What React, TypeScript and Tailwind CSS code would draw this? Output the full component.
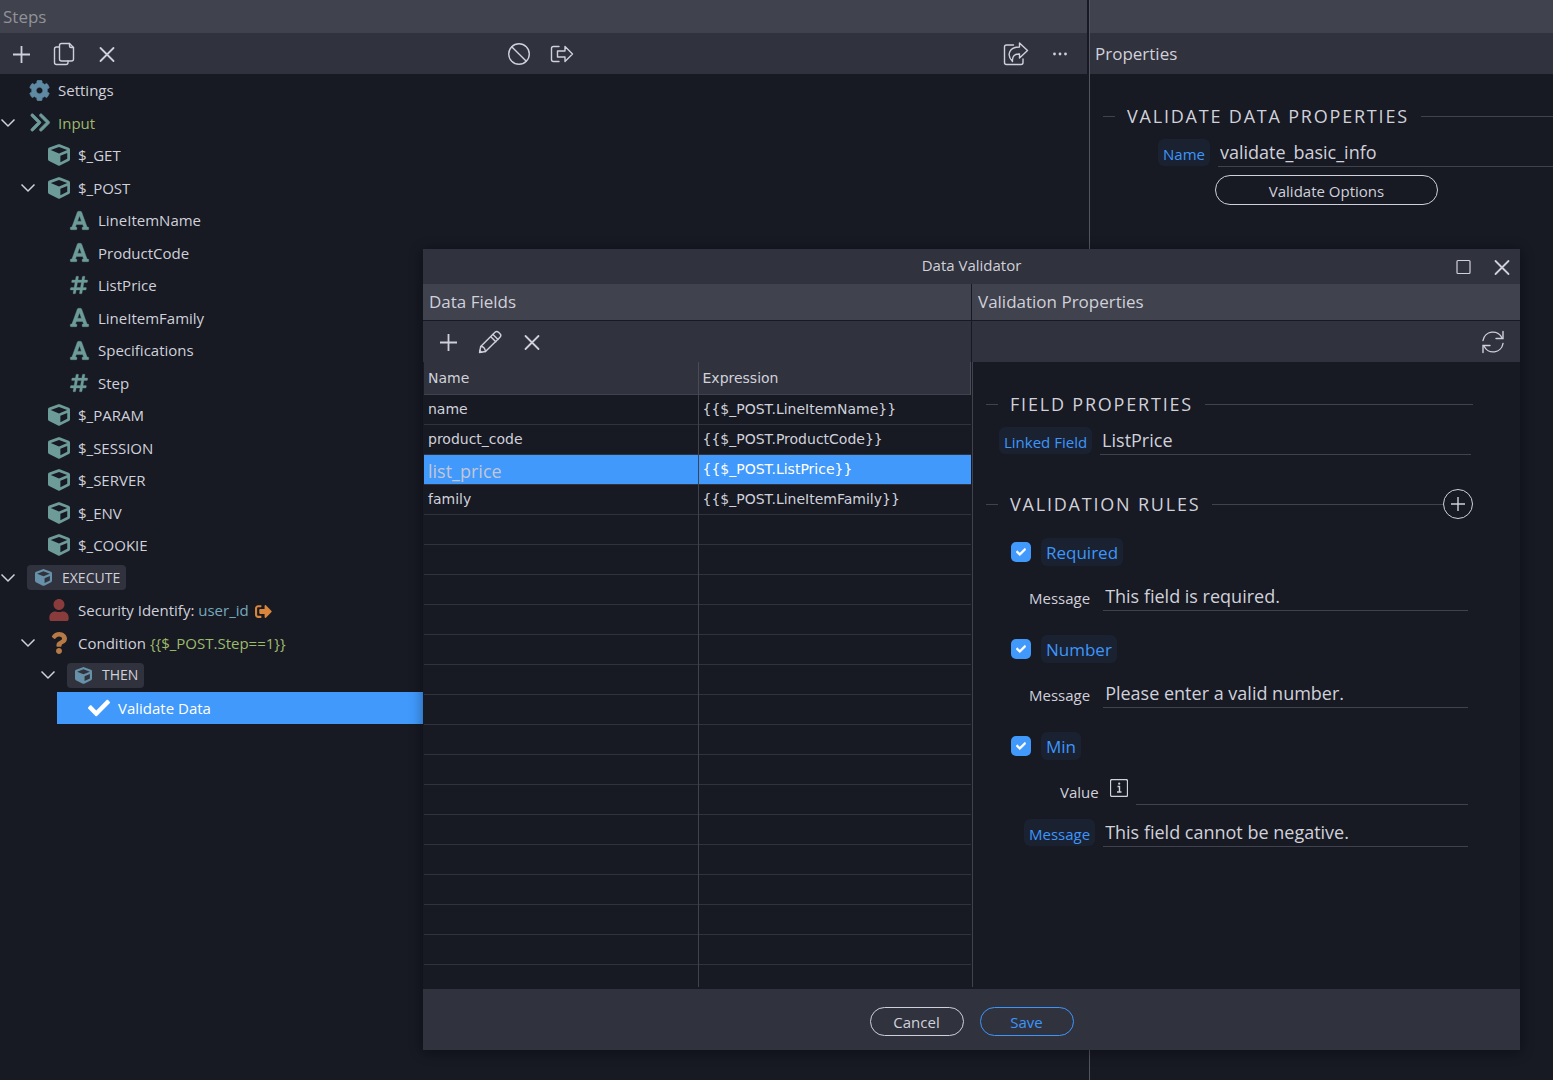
import { useState } from 'react'
import type { ReactNode } from 'react'
import { FaCheck, FaCog, FaCube, FaFont, FaHashtag, FaQuestion, FaSignOutAlt, FaUser } from 'react-icons/fa'
import { FaAnglesRight } from 'react-icons/fa6'

type Level = 0 | 1 | 2 | 3

interface Step {
  level: Level
  icon: ReactNode
  label: ReactNode
  open?: boolean
  block?: boolean
  selected?: boolean
}

const indent: Record<Level, string> = {
  0: 'pl-0',
  1: 'pl-5',
  2: 'pl-10',
  3: 'pl-15',
}

const cube = <FaCube size={22} className="text-[#6d9b98]" />
const text = <FaFont size={21} strokeWidth={10} className="text-[#6d9b98]" />
const num = <FaHashtag size={20} strokeWidth={8} className="text-[#6d9b98]" />
const blockCube = <FaCube size={17} className="text-[#6791a8]" />

const steps: Step[] = [
  { level: 0, icon: <FaCog size={21} strokeWidth={14} className="text-[#5f8aa3]" />, label: 'Settings' },
  { level: 0, icon: <FaAnglesRight size={23} strokeWidth={16} className="text-[#6d9b98]" />, label: <span className="text-[#9ebb6b]">Input</span>, open: true },
  { level: 1, icon: cube, label: '$_GET' },
  { level: 1, icon: cube, label: '$_POST', open: true },
  { level: 2, icon: text, label: 'LineItemName' },
  { level: 2, icon: text, label: 'ProductCode' },
  { level: 2, icon: num, label: 'ListPrice' },
  { level: 2, icon: text, label: 'LineItemFamily' },
  { level: 2, icon: text, label: 'Specifications' },
  { level: 2, icon: num, label: 'Step' },
  { level: 1, icon: cube, label: '$_PARAM' },
  { level: 1, icon: cube, label: '$_SESSION' },
  { level: 1, icon: cube, label: '$_SERVER' },
  { level: 1, icon: cube, label: '$_ENV' },
  { level: 1, icon: cube, label: '$_COOKIE' },
  { level: 0, icon: blockCube, label: 'EXECUTE', open: true, block: true },
  {
    level: 1,
    icon: <FaUser size={22} className="text-[#8a3c3c]" />,
    label: (
      <>
        Security Identify: <span className="text-[#76a9bd]">user_id</span>
        <FaSignOutAlt size={17} className="ml-1.5 inline text-[#d9853b]" />
      </>
    ),
  },
  {
    level: 1,
    icon: <FaQuestion size={22} className="text-[#b57a45]" />,
    label: (
      <>
        Condition <span className="text-[#9ebb6b]">{'{{$_POST.Step==1}}'}</span>
      </>
    ),
    open: true,
  },
  { level: 2, icon: blockCube, label: 'THEN', open: true, block: true },
  { level: 3, icon: <FaCheck size={22} className="text-white" />, label: 'Validate Data', selected: true },
]

const fields = [
  { name: 'name', expression: '{{$_POST.LineItemName}}' },
  { name: 'product_code', expression: '{{$_POST.ProductCode}}' },
  { name: 'list_price', expression: '{{$_POST.ListPrice}}' },
  { name: 'family', expression: '{{$_POST.LineItemFamily}}' },
]

const EMPTY_ROWS = 16

function Line({ size = 28, children }: { size?: number; children: ReactNode }) {
  return (
    <svg width={size} height={size} viewBox="0 0 28 28" fill="none" stroke="currentColor" strokeWidth="1.4" strokeLinejoin="round" strokeLinecap="round" aria-hidden="true">
      {children}
    </svg>
  )
}

const PlusIcon = () => <Line><path d="M14.500 6v17M6 14.500h17" strokeWidth="1.800" strokeLinecap="butt" /></Line>
const CloseIcon = () => <Line><path d="M7.500 8l13 13M20.500 8l-13 13" strokeWidth="1.800" /></Line>

const CopyIcon = () => (
  <Line>
    <path d="M11.500 3.500h8l4 4v11.500a2 2 0 0 1-2 2h-10a2 2 0 0 1-2-2v-13.500a2 2 0 0 1 2-2z" />
    <path d="M19.500 3.500v2.500a1.500 1.500 0 0 0 1.500 1.500h2.500M9.500 7h-3a2 2 0 0 0-2 2v13.500a2 2 0 0 0 2 2h9.500a2 2 0 0 0 2-2v-1.500" />
  </Line>
)

const BanIcon = () => (
  <Line>
    <circle cx="14" cy="14" r="10.300" />
    <path d="M6.700 6.700l14.600 14.600" />
  </Line>
)

const ExitIcon = () => (
  <Line>
    <path d="M11 6.500H5.500a2 2 0 0 0-2 2v11a2 2 0 0 0 2 2H11" />
    <path d="M9.500 11h7.500V6.500l7.500 7.500-7.500 7.500V17H9.500z" />
  </Line>
)

const ShareIcon = () => (
  <Line>
    <path d="M11.500 5H4.500a2 2 0 0 0-2 2v15.500a2 2 0 0 0 2 2h14.500a2 2 0 0 0 2-2V19" />
    <path d="M17.500 3l8 7.500-8 7.500v-4c-4.500-.2-7.500 1.500-7 7.500-6.500-6.500-3-14.500 7-14.500z" />
  </Line>
)

const DotsIcon = () => (
  <Line>
    <g fill="currentColor" stroke="none">
      <circle cx="8.500" cy="14" r="1.400" />
      <circle cx="14" cy="14" r="1.400" />
      <circle cx="19.500" cy="14" r="1.400" />
    </g>
  </Line>
)

const PencilIcon = () => (
  <Line>
    <path d="M3.500 24.500l1.200-6L19 4.300a2.500 2.500 0 0 1 3.500 0l1.500 1.500a2.500 2.500 0 0 1 0 3.500L9.500 23.500z" />
    <path d="M17 6.500l5 5M14.800 8.700l5 5M4.700 18.500c2.500 0 4.300 1.500 4.800 5M3.800 22.500l1.900 1.700" />
  </Line>
)

const RefreshIcon = () => (
  <Line>
    <path d="M4 12.500a10 10 0 0 1 19-2.500M24 15.500a10 10 0 0 1-19 2.500" />
    <path d="M24 3.500V10.500H17M4 24.500V17.500h7" strokeLinejoin="miter" />
  </Line>
)

const CaretIcon = () => (
  <svg width="16" height="16" viewBox="0 0 16 16" fill="none" stroke="currentColor" strokeWidth="1.500" aria-hidden="true">
    <path d="M1.500 4.500L8 11l6.500-6.500" />
  </svg>
)

function IconButton({ label, children }: { label: string; children: ReactNode }) {
  return (
    <button type="button" aria-label={label} className="flex size-7 items-center justify-center text-[#d0d0dc]">
      {children}
    </button>
  )
}

function StepRow({ step }: { step: Step }) {
  const place = step.selected ? 'ml-[57px] pl-[3px] bg-[#4099fb] text-white' : indent[step.level]
  return (
    <li className={`flex items-center ${place}`}>
      <span className="w-[27px] shrink-0">
        {step.open && (
          <button type="button" aria-label="Collapse" className="flex">
            <CaretIcon />
          </button>
        )}
      </span>
      {step.block ? (
        <span className="flex h-[25px] items-center gap-2.5 rounded bg-[#30323d] pr-1.5 pl-2 text-sm">
          {step.icon}
          {step.label}
        </span>
      ) : (
        <>
          <span className="mr-[7px] flex w-6 shrink-0 justify-center">{step.icon}</span>
          <span className="whitespace-nowrap">{step.label}</span>
        </>
      )}
    </li>
  )
}

function Legend({ children, action }: { children: ReactNode; action?: ReactNode }) {
  return (
    <div className="flex h-[30px] items-center">
      <span className="h-px w-3 bg-[#40424d]" />
      <h2 className="px-3 text-lg tracking-widest uppercase">{children}</h2>
      <span className="h-px flex-1 bg-[#40424d]" />
      {action}
    </div>
  )
}

function Field({ id, label, value, chip, info }: { id: string; label: string; value: string; chip?: boolean; info?: boolean }) {
  return (
    <div className="flex h-[30px] items-end">
      <label
        htmlFor={id}
        className={`mb-px flex h-[27px] items-center rounded-md px-[5px] pt-[3px] text-[15px] whitespace-nowrap ${chip ? 'bg-[#1a2130] text-[#3d96fb]' : ''}`}
      >
        {label}
      </label>
      {info && (
        <svg width="18" height="18" viewBox="0 0 18 18" fill="none" stroke="currentColor" className="mb-2 ml-1.5" aria-hidden="true">
          <rect x="0.500" y="0.500" width="17" height="17" rx="1.500" strokeWidth="1.300" />
          <path d="M7.500 7.500h2v5.500M7 13h4.500" strokeWidth="1.400" />
          <circle cx="9.200" cy="4.700" r="1.100" fill="currentColor" stroke="none" />
        </svg>
      )}
      <input
        id={id}
        defaultValue={value}
        className="ml-2 h-[30px] min-w-0 flex-1 border-b border-[#40424d] bg-transparent px-0.5 text-lg outline-none"
      />
    </div>
  )
}

function Rule({ id, label, children }: { id: string; label: string; children: ReactNode }) {
  const [checked, setChecked] = useState(true)
  return (
    <div>
      <div className="flex h-7 items-center pl-[25px]">
        <span className="relative flex size-5">
          <input
            id={id}
            type="checkbox"
            checked={checked}
            onChange={(e) => setChecked(e.target.checked)}
            className="size-5 appearance-none rounded-[5px] bg-[#30323d] checked:bg-[#4099fb]"
          />
          {checked && <FaCheck size={10} strokeWidth={24} className="pointer-events-none absolute top-[5px] left-[5px] text-white" />}
        </span>
        <label htmlFor={id} className="ml-2.5 flex h-7 items-center rounded-md bg-[#1a2130] px-[5px] pt-0.5 text-[17px] text-[#3d96fb]">
          {label}
        </label>
      </div>
      {children}
    </div>
  )
}

function StepsPanel() {
  return (
    <section className="min-w-0 flex-1">
      <h1 className="flex h-[33px] items-center bg-[#40424d] px-[3px] text-[17px] text-[#919298]">Steps</h1>
      <div className="grid h-[41px] grid-cols-[1fr_auto_1fr] items-center bg-[#30323d] pr-[13px] pl-[7px]">
        <div className="flex gap-[15px]">
          <IconButton label="Add step"><PlusIcon /></IconButton>
          <IconButton label="Duplicate"><CopyIcon /></IconButton>
          <IconButton label="Remove"><CloseIcon /></IconButton>
        </div>
        <div className="flex gap-[15px]">
          <IconButton label="Disable"><BanIcon /></IconButton>
          <IconButton label="Toggle output"><ExitIcon /></IconButton>
        </div>
        <div className="flex justify-end gap-4">
          <IconButton label="Open"><ShareIcon /></IconButton>
          <IconButton label="More"><DotsIcon /></IconButton>
        </div>
      </div>
      <ul className="grid h-[650px] grid-rows-[repeat(20,minmax(0,1fr))] text-[15px]">
        {steps.map((step, i) => (
          <StepRow key={i} step={step} />
        ))}
      </ul>
    </section>
  )
}

function PropertiesPanel() {
  return (
    <aside className="w-[464px] shrink-0 border-l border-[#53545e]">
      <div className="h-[33px] bg-[#40424d]" />
      <h2 className="flex h-[41px] items-center bg-[#30323d] px-[5px] text-[17px]">Properties</h2>
      <div className="pt-[27px] pl-[13px]">
        <Legend>Validate Data Properties</Legend>
        <div className="mt-1.5 pl-[55px]">
          <Field id="step-name" label="Name" value="validate_basic_info" chip />
        </div>
        <button type="button" className="mt-2 ml-28 h-[30px] w-[223px] rounded-full border border-[#d0d0dc] pt-0.5 text-[15px]">
          Validate Options
        </button>
      </div>
    </aside>
  )
}

function FieldsTable() {
  return (
    <table className="ml-px w-[547px] table-fixed border-collapse font-['DejaVu_Sans'] text-sm">
      <thead>
        <tr className="h-8 border-b border-[#40424d] bg-[#30323d] text-left">
          <th className="w-[274px] border-r border-[#4a4b56] px-1 font-normal">Name</th>
          <th className="border-r border-[#4a4b56] px-1 font-normal">Expression</th>
        </tr>
      </thead>
      <tbody>
        {fields.map((field) => {
          const selected = field.name === 'list_price'
          return (
            <tr key={field.name} className={`h-[30px] border-b border-[#30323d] ${selected ? 'bg-[#4099fb]' : ''}`}>
              <td className="border-r border-[#40424d] px-1 py-0">
                {selected ? (
                  <input
                    aria-label="Field name"
                    defaultValue={field.name}
                    className="block h-[29px] w-full bg-transparent pt-1 font-['Open_Sans'] text-lg text-[#c3c6d6] outline-none"
                  />
                ) : (
                  field.name
                )}
              </td>
              <td className={`px-1 py-0 ${selected ? 'text-white' : ''}`}>{field.expression}</td>
            </tr>
          )
        })}
        {Array.from({ length: EMPTY_ROWS }, (_, i) => (
          <tr key={i} className={i < EMPTY_ROWS - 1 ? 'h-[30px] border-b border-[#30323d]' : 'h-[23px]'}>
            <td className="border-r border-[#40424d] p-0" />
            <td className="p-0" />
          </tr>
        ))}
      </tbody>
    </table>
  )
}

function ValidatorDialog() {
  return (
    <div
      role="dialog"
      aria-label="Data Validator"
      className="absolute top-[249px] right-[33px] bottom-[30px] left-[423px] flex flex-col bg-[#171923] shadow-[0_2px_12px_rgba(0,0,0,0.4)]"
    >
      <header className="grid h-[35px] shrink-0 grid-cols-[1fr_auto_1fr] items-center bg-[#30323d]">
        <h2 className="col-start-2 pb-0.5 text-[15px]">Data Validator</h2>
        <div className="flex justify-end gap-2.5 pr-1">
          <IconButton label="Maximize"><Line><rect x="7" y="7.500" width="13" height="13" rx="1" strokeWidth="1.200" /></Line></IconButton>
          <IconButton label="Close"><CloseIcon /></IconButton>
        </div>
      </header>

      <div className="flex min-h-0 flex-1">
        <section className="w-[548px] shrink-0">
          <h3 className="flex h-9 items-center bg-[#40424d] px-1.5 text-[17px]">Data Fields</h3>
          <div className="mt-px flex h-[41px] items-center gap-3.5 bg-[#30323d] px-[11px]">
            <IconButton label="Add field"><PlusIcon /></IconButton>
            <IconButton label="Edit field"><PencilIcon /></IconButton>
            <IconButton label="Remove field"><CloseIcon /></IconButton>
          </div>
          <FieldsTable />
        </section>

        <section className="ml-px flex min-w-0 flex-1 flex-col">
          <h3 className="flex h-9 items-center bg-[#40424d] px-1.5 text-[17px]">Validation Properties</h3>
          <div className="mt-px flex h-[41px] items-center justify-end bg-[#30323d] px-[13px]">
            <IconButton label="Refresh"><RefreshIcon /></IconButton>
          </div>
          <div className="mb-0.5 flex-1 border-l border-[#40424d] pt-[27px] pr-[47px] pl-[13px]">
            <Legend>Field Properties</Legend>
            <div className="mt-1.5 pr-0.5 pl-[13px]">
              <Field id="linked-field" label="Linked Field" value="ListPrice" chip />
            </div>
            <div className="mt-[34px]">
              <Legend
                action={
                  <button type="button" aria-label="Add rule" className="flex size-[30px] items-center justify-center rounded-full border border-[#d0d0dc]">
                    <svg width="14" height="14" viewBox="0 0 14 14" stroke="currentColor" strokeWidth="1.400" aria-hidden="true">
                      <path d="M7 0v14M0 7h14" />
                    </svg>
                  </button>
                }
              >
                Validation Rules
              </Legend>
            </div>
            <div className="mt-[19px] flex flex-col gap-6 pr-[5px]">
              <Rule id="rule-required" label="Required">
                <div className="mt-[15px] pl-[38px]">
                  <Field id="required-message" label="Message" value="This field is required." />
                </div>
              </Rule>
              <Rule id="rule-number" label="Number">
                <div className="mt-[15px] pl-[38px]">
                  <Field id="number-message" label="Message" value="Please enter a valid number." />
                </div>
              </Rule>
              <Rule id="rule-min" label="Min">
                <div className="mt-[15px] pl-[69px]">
                  <Field id="min-value" label="Value" value="" info />
                </div>
                <div className="mt-3 pl-[38px]">
                  <Field id="min-message" label="Message" value="This field cannot be negative." chip />
                </div>
              </Rule>
            </div>
          </div>
        </section>
      </div>

      <footer className="flex h-[61px] shrink-0 items-start justify-center gap-4 bg-[#30323d] pt-[18px] text-[15px]">
        <button type="button" className="h-[29px] w-[94px] rounded-full border border-[#d0d0dc] pt-0.5">Cancel</button>
        <button type="button" className="h-[29px] w-[94px] rounded-full border border-[#3d96fb] pt-0.5 text-[#3d96fb]">Save</button>
      </footer>
    </div>
  )
}

export default function App() {
  return (
    <main className="relative flex min-h-screen gap-0.5 overflow-hidden bg-[#171923] font-['Open_Sans',sans-serif] text-[#d0d1da]">
      <StepsPanel />
      <PropertiesPanel />
      <ValidatorDialog />
    </main>
  )
}
